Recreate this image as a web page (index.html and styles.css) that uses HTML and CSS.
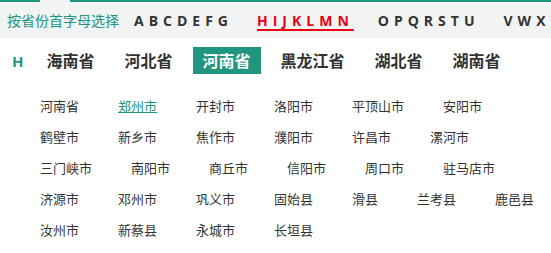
FILE: index.html
```html
<!DOCTYPE html>
<html lang="zh-CN">
  <head>
    <meta charset="UTF-8" />
    <title>按省份选择城市</title>
    <link rel="stylesheet" href="styles.css">
  </head>
  <body>
    <div class="topBar">
      <span class="gap"></span>
      <span class="tip">按省份首字母选择</span>
      <a class="group">ABCDEFG</a>
      <a class="group on">HIJKLMN</a>
      <a class="group">OPQRSTU</a>
      <a class="group">VWXYZ</a>
    </div>
    <div class="provBox">
      <span class="letter">H</span>
      <a class="prov">海南省</a>
      <a class="prov">河北省</a>
      <a class="prov cur">河南省</a>
      <a class="prov">黑龙江省</a>
      <a class="prov">湖北省</a>
      <a class="prov">湖南省</a>
    </div>
    <ul class="cityList">
      <li>河南省</li>
      <li class="sel">郑州市</li>
      <li>开封市</li>
      <li>洛阳市</li>
      <li>平顶山市</li>
      <li>安阳市</li>
      <li>鹤壁市</li>
      <li>新乡市</li>
      <li>焦作市</li>
      <li>濮阳市</li>
      <li>许昌市</li>
      <li>漯河市</li>
      <li>三门峡市</li>
      <li>南阳市</li>
      <li>商丘市</li>
      <li>信阳市</li>
      <li>周口市</li>
      <li>驻马店市</li>
      <li>济源市</li>
      <li>邓州市</li>
      <li>巩义市</li>
      <li>固始县</li>
      <li>滑县</li>
      <li>兰考县</li>
      <li>鹿邑县</li>
      <li>汝州市</li>
      <li>新蔡县</li>
      <li>永城市</li>
      <li>长垣县</li>
    </ul>
  </body>
</html>
```

FILE: styles.css
```css
body {
  margin: 0;
  padding: 0;
  width: 551px;
  overflow: hidden;
  background: #fff;
  font-family: "Open Sans", "Noto Sans CJK SC", sans-serif;
}
a {
  cursor: pointer;
}
.topBar {
  position: relative;
  display: flex;
  align-items: center;
  height: 36px;
  padding-left: 7px;
  background: #f2f3f3;
  border-top: 2px solid #209680;
  white-space: nowrap;
}
/* 顶部边线的缺口 */
.topBar .gap {
  position: absolute;
  top: -2px;
  left: 40px;
  width: 30px;
  height: 2px;
  background: #f2f3f3;
}
.tip {
  font-size: 14px;
  color: #209680;
  font-family: "Noto Sans CJK SC", sans-serif;
}
.group {
  margin-left: 15px;
  margin-right: 5px;
  font-size: 14px;
  font-weight: bold;
  letter-spacing: 5px;
  color: #333;
}
.group + .group {
  margin-left: 19px;
}
.group.on {
  color: #e60012;
  text-decoration: underline;
  text-decoration-thickness: 2px;
  text-underline-offset: 3px;
}
.provBox {
  display: flex;
  align-items: center;
  height: 27px;
  margin-top: 9px;
  padding-left: 12px;
}
.letter {
  margin-right: 13px;
  font-size: 15px;
  font-weight: bold;
  color: #209680;
}
.prov {
  height: 27px;
  line-height: 27px;
  padding: 0 10px;
  margin-right: 10px;
  font-size: 16px;
  font-weight: bold;
  color: #333;
  font-family: "Noto Sans CJK SC", sans-serif;
}
.prov.cur {
  background: #209680;
  color: #fff;
}
.cityList {
  list-style: none;
  display: flex;
  flex-wrap: wrap;
  column-gap: 39px;
  width: 505px;
  margin: 16px 0 0 40px;
  padding: 0;
}
.cityList li {
  line-height: 31px;
  font-size: 13px;
  color: #333;
  font-family: "Noto Sans CJK SC", sans-serif;
}
.cityList .sel {
  color: #209680;
  text-decoration: underline;
}
```
